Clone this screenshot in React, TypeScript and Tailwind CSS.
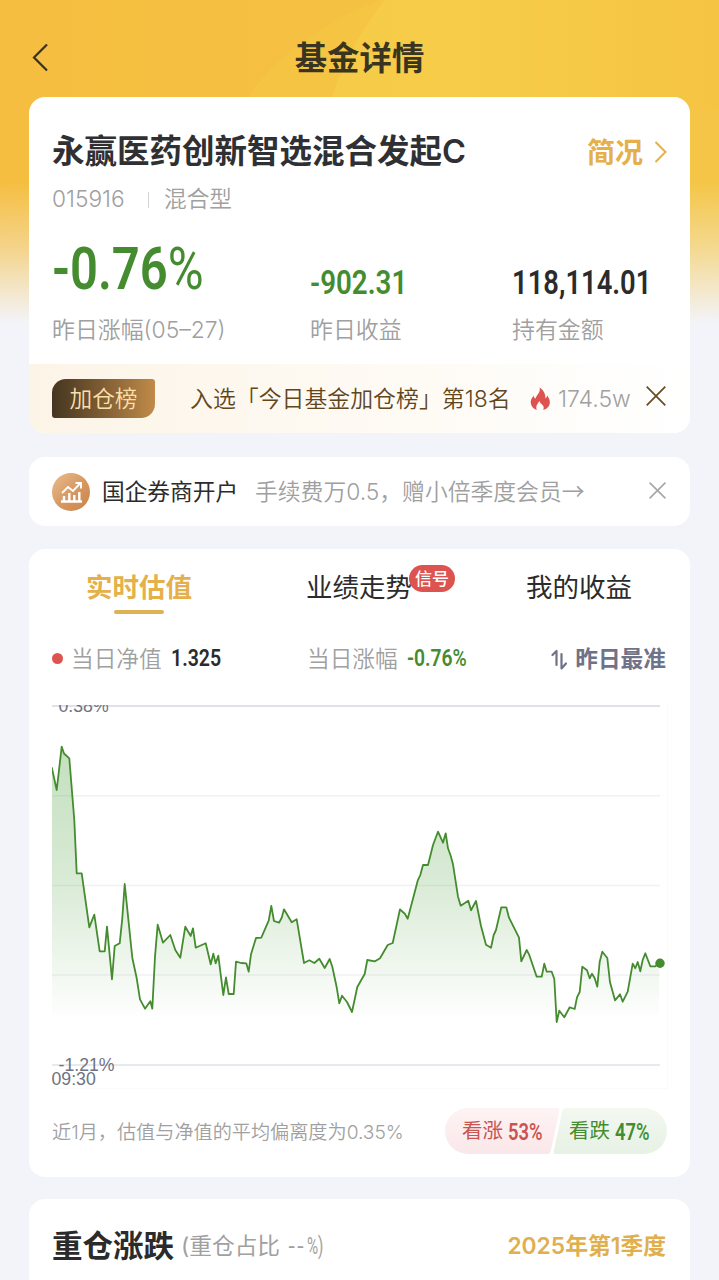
import type { ReactNode } from "react";
import clsx from "clsx";

const CHART_POINTS: [number, number][] = [
  [51.7, 767.3], [56.7, 790], [61.7, 746.7], [64, 753.5], [69.3, 758.3], [74.3, 820], [76.7, 873.3], [81.7, 873.3],
  [89.3, 927.3], [94.3, 914.7], [99.7, 951.3], [104.7, 951.3], [107, 926.7], [112, 979.3], [114.7, 946], [119.7, 943.3],
  [122.3, 918.3], [124.7, 884], [132.3, 957.7], [136.7, 978.3], [140, 999.3], [145, 1008.7], [150.3, 1001.3],
  [152.3, 1008.7], [155, 956.7], [157.7, 924.7], [163, 942.7], [170.3, 935], [175.3, 950], [180.3, 957.7],
  [185.3, 926.7], [190.7, 936], [193, 928.3], [195.7, 947.7], [205.7, 943.3], [210.7, 964.3], [213.3, 953.7],
  [215.7, 963.3], [218.3, 955.7], [223.3, 995], [226, 977.3], [228.7, 994], [233.7, 994], [236, 961.7], [241, 963],
  [246.3, 963.3], [248.7, 971.7], [251, 954.3], [256, 938], [261.3, 937.7], [268.7, 920.7], [271.3, 906], [274, 921],
  [279, 922.7], [281.7, 917.7], [284, 909.3], [291.7, 922.3], [296.7, 919.3], [304, 963], [309.3, 960.3], [314.3, 963],
  [319.3, 958.7], [324.7, 968], [329.7, 959], [332.3, 966.7], [336.7, 987.3], [339.3, 1003.3], [342, 995.7],
  [347, 1002], [352, 1012], [357.3, 987], [364.7, 974], [367.3, 960], [375, 961.3], [380, 958.3], [387.7, 945],
  [392.7, 943], [400, 909.3], [405, 914], [407.7, 918.7], [417.7, 880.7], [420.3, 875], [423, 865], [428, 865],
  [433, 845], [438, 831.7], [443, 842.7], [445.7, 833.3], [448, 848.3], [450.7, 855.7], [453, 864.3], [458, 896.7],
  [460.7, 905.7], [468.3, 900.7], [471, 910.3], [476, 901], [481, 926], [486, 944.7], [491, 947.7], [493.7, 935],
  [496, 930], [501.3, 907.3], [506.3, 907.3], [509, 917.7], [519, 937.7], [521.3, 961.3], [526.7, 950], [529, 954.3],
  [536.7, 976.7], [541.7, 976.7], [544.3, 963.7], [546.7, 971.7], [551.7, 971.7], [554.3, 979], [556.7, 1022],
  [559.3, 1010.7], [564.3, 1017.3], [569.7, 1007.3], [574.7, 1009], [577, 997.3], [579.7, 992], [582.3, 966.7],
  [587, 970.3], [589.7, 978.3], [592, 973.7], [594.7, 978.3], [597.3, 986.7], [599.7, 961.7], [602.3, 951.7],
  [607.3, 958], [610, 982.3], [615, 1000.3], [620, 994.3], [622.7, 1001.7], [627.7, 991.7], [632.7, 963.7],
  [635.3, 968.3], [637.7, 962], [640.3, 971.3], [642.7, 960], [645.3, 953.3], [650.3, 966.3], [655.3, 966.3], [659, 963],
];

const CJK = "font-[Inter,'Noto_Sans_CJK_SC',sans-serif]";

// condensed figures
function Num({ className, children }: { className?: string; children: ReactNode }) {
  return (
    <span
      className={clsx(
        "inline-block origin-left whitespace-nowrap font-[Roboto,sans-serif] leading-none",
        className
      )}
    >
      {children}
    </span>
  );
}

function Cross({ className }: { className?: string }) {
  return (
    <svg className={className} viewBox="0 0 20 20" fill="none" stroke="currentColor" aria-hidden="true">
      <path d="M0.7 0.7 19.3 19.3M19.3 0.7 0.7 19.3" />
    </svg>
  );
}

function Header() {
  return (
    <header className="relative flex h-[97px] items-center justify-center pt-[21px]">
      <svg
        className="absolute left-[32px] top-[43px] h-[29px] w-[17px]"
        viewBox="0 0 17 29"
        fill="none"
        stroke="#3a3222"
        strokeWidth="2.2"
        aria-hidden="true"
      >
        <path d="M15 1.5 2 14.500 15 27.500" />
      </svg>
      <h1 className="text-[32.400px] font-bold leading-none text-[#3a3521]">基金详情</h1>
    </header>
  );
}

function FundCard() {
  return (
    <section className="h-[336px] overflow-hidden rounded-[16px] bg-white">
      <div className="h-[267px] px-[23px]">
        <div className="flex h-[79px] items-end justify-between">
          <h2 className="whitespace-nowrap text-[32.5px] font-bold leading-[48px] text-[#2f3033]">
            永赢医药创新智选混合发起<span className="font-semibold">C</span>
          </h2>
          <div className="flex items-center text-[28px] font-bold leading-[46px] text-[#e5b04a]">
            简况
            <svg
              className="-mt-[3px] ml-[11px] h-[22px] w-[13px]"
              viewBox="0 0 13 22"
              fill="none"
              stroke="currentColor"
              strokeWidth="2"
              aria-hidden="true"
            >
              <path d="M1.5 1 11.5 11 1.5 21" />
            </svg>
          </div>
        </div>
        <div className="flex h-[47px] items-center text-[22.7px] font-[350] text-[#a0a0a0]">
          <span className="w-[96px]">015916</span>
          <span className="h-[16px] w-px bg-[#d5d5d5]" />
          <span className="ml-[15px]">混合型</span>
        </div>

        <div className="flex">
          <div className="w-[258px] shrink-0">
            <div className="flex h-[78px] items-end">
              <Num className="mb-[3px] scale-x-[0.83] text-[59px] font-semibold text-[#448c2f]">
                -0.76<span className="font-normal">%</span>
              </Num>
            </div>
            <Label>昨日涨幅(05–27)</Label>
          </div>
          <div className="w-[202px] shrink-0">
            <div className="flex h-[78px] items-end">
              <Num className="mb-[2px] scale-x-[0.84] text-[33px] font-semibold text-[#448c2f]">-902.31</Num>
            </div>
            <Label>昨日收益</Label>
          </div>
          <div className="shrink-0">
            <div className="flex h-[78px] items-end">
              <Num className="mb-[2px] scale-x-[0.83] text-[33px] font-semibold text-[#2b2b2b]">118,114.01</Num>
            </div>
            <Label>持有金额</Label>
          </div>
        </div>
      </div>

      <div className="flex h-[69px] items-center bg-linear-to-r from-[#fcf4e7] via-[#fefaf3] to-white px-[23px]">
        <span className="flex h-[39px] w-[103px] shrink-0 items-center justify-center rounded-[3px] rounded-br-[14px] rounded-tl-[14px] bg-linear-to-r from-[#453520] to-[#c18b49] pt-[2px] text-[22.7px] font-[350] leading-none text-[#fbdfa9]">
          加仓榜
        </span>
        <span className="ml-[35px] mt-[2px] w-[340px] shrink-0 whitespace-nowrap text-[22.900px] font-[350] text-[#61461d]">
          入选「今日基金加仓榜」第18名
        </span>
        <svg className="h-[24px] w-[21px] shrink-0" viewBox="0 0 22 24" fill="#dc5350" aria-hidden="true">
          <path d="M10 0c1 4-1 6-2.500 8-.8 1.200-1.500 2.200-1.700 3.500C4.600 11 4 9.800 4 8.500 1.500 11 .5 13.500.8 16c.4 4 3.200 6.600 6.400 7.600C5.800 20.500 7 18 10 14.200c.5 2 1.500 2.700 2.900 3.900 1.700 1.500 1.900 3.600.9 5.500 4-1.100 7-4 7-8.200 0-2.600-1.200-5-2.800-7-.2 1.400-.8 2.300-1.900 2.900C16.300 6.500 14 2.500 10 0Z" />
        </svg>
        <span className="ml-[7px] mt-[1px] w-[88px] shrink-0 text-[23px] font-[350] text-[#a0a0a0]">174.5w</span>
        <Cross className="mb-[5px] h-[20px] w-[20px] shrink-0 stroke-[1.8] text-[#6a4e25]" />
      </div>
    </section>
  );
}

function Label({ children }: { children: ReactNode }) {
  return (
    <div className="mt-[10px] whitespace-nowrap text-[22.900px] font-[350] leading-[38px] text-[#a0a0a0]">
      {children}
    </div>
  );
}

function PromoBar() {
  return (
    <section className="mt-[24px] flex h-[69px] items-center rounded-[16px] bg-white px-[23px]">
      <span className="flex h-[38px] w-[38px] items-center justify-center rounded-full bg-linear-to-br from-[#e9bd91] via-[#d89a64] to-[#c98247]">
        <svg className="h-[24px] w-[24px]" viewBox="0 0 24 24" fill="none" stroke="#fff" strokeWidth="1.900" aria-hidden="true">
          <path d="M2 21.500h21M5 21v-5M10.300 21v-8M15.300 21v-6M20.300 21v-9" strokeWidth="2.4" />
          <path d="m3 13 6-6 5 4 7-7.500M16.500 3h5.500v5.500" />
        </svg>
      </span>
      <span className="ml-[12px] mt-[1px] w-[153px] text-[22.7px] leading-none text-[#2b2b2b]">国企券商开户</span>
      <span className="mt-[1px] whitespace-nowrap text-[22.800px] font-[350] leading-none text-[#a0a0a0]">
        手续费万0.5，赠小倍季度会员
        <span className="font-['Noto_Sans_CJK_SC',sans-serif]">→</span>
      </span>
      <Cross className="mb-[2px] ml-auto mr-[1px] h-[17px] w-[17px] stroke-[1.8] text-[#a5a5a5]" />
    </section>
  );
}

function ValuationChart() {
  const line = CHART_POINTS.map((p) => p.join(",")).join(" ");
  return (
    <svg className="block h-[384px] w-[616px]" viewBox="52 705 616 384" fill="none" aria-hidden="true">
      <defs>
        <linearGradient id="area" gradientUnits="userSpaceOnUse" x1="0" y1="746" x2="0" y2="1022">
          <stop offset="0" stopColor="#459b34" stopOpacity="0.32" />
          <stop offset="0.5" stopColor="#459b34" stopOpacity="0.2" />
          <stop offset="1" stopColor="#459b34" stopOpacity="0" />
        </linearGradient>
      </defs>
      <g stroke="#f1f1f3" strokeWidth="1.5">
        <path d="M52 795.800H660M52 885.500H660M52 975H660" />
      </g>
      <path d="M52 1088.500H667.500V705" stroke="#fafafa" />
      <polygon points={`52,1022 ${line} 659,1022`} fill="url(#area)" />
      <g stroke="#d6d8df" strokeWidth="1.5">
        <path d="M52 706H660" />
        <path d="M52 1065H660" stroke="#e0e2e9" />
      </g>
      <polyline points={line} stroke="#448c2f" strokeWidth="1.8" strokeLinejoin="round" />
      <circle cx="660" cy="963.300" r="4.700" fill="#448c2f" />
      <g fill="#6f7282" fontSize="17.700" fontFamily="'Liberation Sans', sans-serif">
        <text x="58.500" y="712">0.38%</text>
        <text x="58.500" y="1071">-1.21%</text>
        <text x="51.500" y="1085">09:30</text>
      </g>
    </svg>
  );
}

function ValuationCard() {
  return (
    <section className="mt-[23px] h-[628px] rounded-[16px] bg-white px-[23px]">
      <div className="flex h-[78px] text-[26.500px] leading-[38px] text-[#2b2b2b]">
        <div className="ml-[34px] mt-[19px] flex w-[106px] flex-col items-center whitespace-nowrap font-bold text-[#e5b04a]">
          实时估值
          <span className="mt-[4px] h-[4px] w-[50px] rounded-full bg-[#deb254]" />
        </div>
        <div className="relative ml-[114px] mt-[19px] w-[106px] whitespace-nowrap">
          业绩走势
          <span className="absolute -top-[3px] left-[103px] flex h-[27px] w-[46px] items-center justify-center rounded-full bg-[#dc5350] pt-px text-[17px] font-medium leading-none text-white">
            信号
          </span>
        </div>
        <div className="ml-[114px] mt-[19px] whitespace-nowrap">我的收益</div>
      </div>

      <div className="flex h-[78px] items-start pt-[13px] text-[22.7px] leading-[38px] text-[#a0a0a0]">
        <div className="flex w-[255px] items-center font-[350]">
          <span className="-mt-[2px] mr-[8px] h-[11px] w-[11px] rounded-full bg-[#dc5350]" />
          当日净值
          <Num className="ml-[9px] scale-x-[0.83] text-[23.500px] font-semibold text-[#2b2b2b]">1.325</Num>
        </div>
        <div className="flex items-center font-[350]">
          当日涨幅
          <Num className="ml-[9px] scale-x-[0.82] text-[23.500px] font-semibold text-[#448c2f]">
            -0.76<span className="font-medium">%</span>
          </Num>
        </div>
        <div className="ml-auto mr-[1px] flex items-center font-bold text-[#6f7288]">
          <svg
            className="mr-[8px] h-[21px] w-[16px]"
            viewBox="0 0 16 21"
            fill="none"
            stroke="currentColor"
            strokeWidth="2.200"
            strokeLinecap="round"
            strokeLinejoin="round"
            aria-hidden="true"
          >
            <path d="M1.500 6 5.500 2v14M10.500 5v14.500l4.500-5" />
          </svg>
          昨日最准
        </div>
      </div>

      <ValuationChart />

      <div className="mt-[19px] flex h-[46px] items-center justify-between">
        <span className="mt-[3px] whitespace-nowrap text-[19.150px] font-[350] text-[#a0a0a0]">
          近1月，估值与净值的平均偏离度为0.35%
        </span>
        <div className="relative flex h-[46px] w-[222px] text-[20.500px] leading-[48px]">
          <svg className="absolute inset-0 h-full w-full" viewBox="0 0 222 46" aria-hidden="true">
            <defs>
              <linearGradient id="up" x1="0" y1="0" x2="0" y2="1">
                <stop stopColor="#fef3f4" />
                <stop offset="1" stopColor="#fae7e9" />
              </linearGradient>
              <linearGradient id="down" x1="0" y1="0" x2="0" y2="1">
                <stop stopColor="#f3f8f1" />
                <stop offset="1" stopColor="#e7f1e4" />
              </linearGradient>
            </defs>
            <path d="M23 0h89q3 0 2.300 3l-8.600 40q-.7 3-3.700 3H23a23 23 0 0 1 0-46Z" fill="url(#up)" />
            <path d="M121 0h78a23 23 0 0 1 0 46h-88q-3 0-2.300-3l8.600-40q.7-3 3.700-3Z" fill="url(#down)" />
          </svg>
          <span className="relative flex w-[107px] items-center whitespace-nowrap pl-[17px] text-[#c95450]">
            看涨
            <Num className="ml-[5px] mt-[2px] scale-x-[0.8] text-[23px] font-semibold">
              53<span className="font-medium">%</span>
            </Num>
          </span>
          <span className="relative flex items-center whitespace-nowrap pl-[17px] text-[#448c2f]">
            看跌
            <Num className="ml-[5px] mt-[2px] scale-x-[0.8] text-[23px] font-semibold">
              47<span className="font-medium">%</span>
            </Num>
          </span>
        </div>
      </div>
    </section>
  );
}

function HoldingsCard() {
  return (
    <section className="mt-[22px] flex h-[120px] items-start rounded-t-[16px] bg-white px-[23px] pt-[25px] leading-[44px]">
      <h3 className="text-[30.500px] font-bold text-[#2b2b2b]">重仓涨跌</h3>
      <span className="ml-[7px] whitespace-nowrap text-[22.7px] text-[#a0a0a0]">
        (重仓占比 <Num className="ml-[2px] mr-[1px] text-[23px] tracking-[2.500px]">--</Num>
        <Num className="scale-x-[0.66] text-[23px]">%)</Num>
      </span>
      <span className="ml-auto mr-[1px] whitespace-nowrap text-[22.800px] font-semibold text-[#e0af4e]">
        2025年第1季度
      </span>
    </section>
  );
}

export default function App() {
  return (
    <div className={clsx("relative h-[1280px] w-[719px] overflow-hidden bg-[#f3f4fa]", CJK)}>
      <svg className="absolute inset-x-0 top-0 h-[330px] w-[719px]" viewBox="0 0 719 330" aria-hidden="true">
        <defs>
          <linearGradient id="sky" x1="0" y1="0" x2="1" y2="0">
            <stop offset="0" stopColor="#f5be40" />
            <stop offset="0.45" stopColor="#f5c142" />
            <stop offset="1" stopColor="#f4c647" />
          </linearGradient>
          <linearGradient id="glow" x1="0" y1="0" x2="1" y2="0">
            <stop offset="0" stopColor="#f6cb47" />
            <stop offset="0.35" stopColor="#f6cc48" />
            <stop offset="1" stopColor="#f5c443" />
          </linearGradient>
          <linearGradient id="fade" x1="0" y1="0" x2="0" y2="1">
            <stop offset="0.55" stopColor="#f3f4fa" stopOpacity="0" />
            <stop offset="0.75" stopColor="#f3f4fa" stopOpacity="0.4" />
            <stop offset="0.98" stopColor="#f3f4fa" />
          </linearGradient>
        </defs>
        <rect width="719" height="330" fill="url(#sky)" />
        <path d="M380 0Q280 40 240 110H719V0Z" fill="#f6c645" fillOpacity="0.6" />
        <path d="M385 0Q345 50 328 110H719V0Z" fill="url(#glow)" />
        <rect width="719" height="330" fill="url(#fade)" />
      </svg>
      <Header />
      <main className="relative ml-[29px] w-[661px]">
        <FundCard />
        <PromoBar />
        <ValuationCard />
        <HoldingsCard />
      </main>
    </div>
  );
}
